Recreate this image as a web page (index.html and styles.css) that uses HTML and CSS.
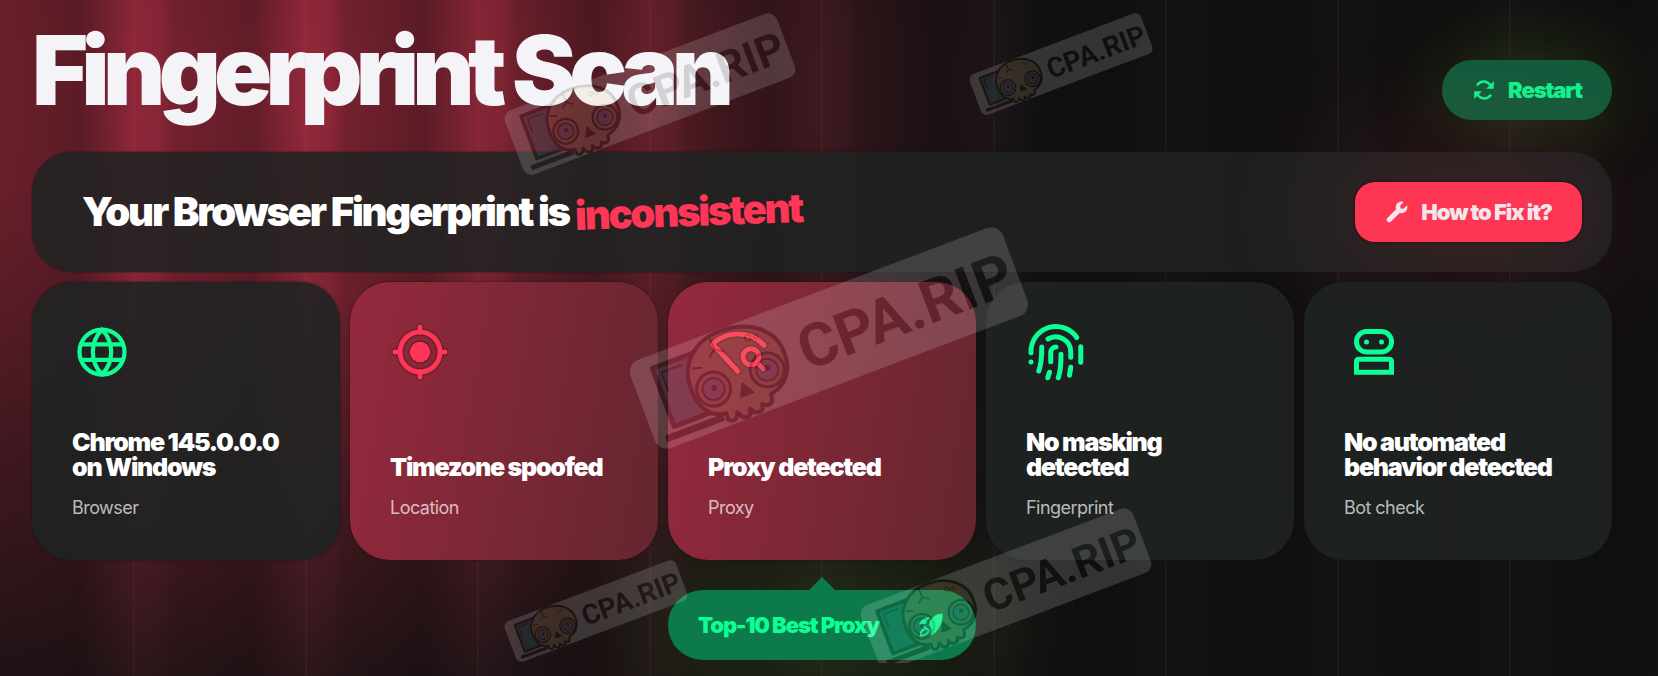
FILE: index.html
```html
<!DOCTYPE html>
<html lang="en">
<head>
    <meta charset="UTF-8">
    <meta name="viewport" content="width=device-width, initial-scale=1.0">
    <title>Fingerprint Scan</title>
    <link rel="stylesheet" href="styles.css">
</head>
<body>
    <main class="scan">
        <header class="scan__header">
            <h1 class="scan__title">Fingerprint Scan</h1>
            <button class="button button--restart" type="button">
                <svg class="button__icon" viewBox="0 0 24 24" aria-hidden="true">
                    <path d="M5.4 6.6C9 2.4 15 2.4 18.6 7.4M18.6 17.4C15 21.6 9 21.6 5.4 16.6" fill="none" stroke="currentColor" stroke-width="2.4" stroke-linecap="round"/>
                    <path d="M21.8 3v7.8h-7.6zM2.2 21v-7.8h7.6z" fill="currentColor"/>
                </svg>
                Restart
            </button>
        </header>

        <section class="verdict">
            <h2 class="verdict__text">Your Browser Fingerprint is <span class="verdict__status">inconsistent</span></h2>
            <button class="button button--fix" type="button">
                <svg class="button__icon" viewBox="-40 -40 592 592" aria-hidden="true">
                    <path fill="currentColor" d="M507.73 109.1c-2.24-9.03-13.54-12.09-20.12-5.51l-74.36 74.36-67.88-11.31-11.31-67.88 74.36-74.36c6.62-6.62 3.43-17.9-5.66-20.16-47.38-11.74-99.55.91-136.58 37.93-39.64 39.64-50.55 97.1-34.05 147.2L18.74 402.76c-24.99 24.99-24.99 65.51 0 90.5 24.99 24.99 65.51 24.99 90.5 0l213.21-213.21c50.12 16.71 107.47 5.68 147.37-34.22 37.07-37.07 49.7-89.32 37.91-136.73z"/>
                </svg>
                How to Fix it?
            </button>
        </section>

        <section class="checks">
            <article class="card">
                <svg class="card__icon" viewBox="0 0 24 24" stroke-width="1.7" aria-hidden="true">
                    <circle cx="12" cy="12" r="9"/>
                    <path d="M12 3c-4.9 5-4.9 13 0 18M12 3c4.9 5 4.9 13 0 18M3.6 8.9h16.8M3.6 15.1h16.8"/>
                </svg>
                <h3 class="card__title">Chrome 145.0.0.0 on Windows</h3>
                <p class="card__label">Browser</p>
            </article>

            <article class="card card--bad">
                <svg class="card__icon" viewBox="0 0 24 24" stroke-width="2" aria-hidden="true">
                    <circle cx="12" cy="12" r="8"/>
                    <circle cx="12" cy="12" r="3.1" fill="currentColor"/>
                    <path d="M12 2v2M12 20v2M2 12h2M20 12h2"/>
                </svg>
                <h3 class="card__title">Timezone spoofed</h3>
                <p class="card__label">Location</p>
            </article>

            <article class="card card--bad">
                <svg class="card__icon" viewBox="0 0 24 24" stroke-width="2" aria-hidden="true">
                    <path d="M22.4 9.3C17.4 3.6 7.4 3.2 1.9 8.9l10 10.8"/>
                    <circle cx="17.2" cy="13.9" r="3.2"/>
                    <path d="M19.6 16.3l2.4 2.4"/>
                </svg>
                <h3 class="card__title">Proxy detected</h3>
                <p class="card__label">Proxy</p>
            </article>

            <article class="card">
                <svg class="card__icon" viewBox="0 0 24 24" stroke-width="2" aria-hidden="true">
                    <path d="M2 12.3V12a10 10 0 0 1 18.3-5.8"/>
                    <path d="M2 16h.01M6.3 10c0 3.5 0 6.5-1.2 9.6"/>
                    <path d="M8.8 6.8A6 6 0 0 1 17.9 12v2.1"/>
                    <path d="M12 10a2.1 2.1 0 0 0-2.1 2.2v3.7"/>
                    <path d="M14 12.9c0 3.3 0 6.5-1.1 9.4M9.4 20.1l-.7 2.2"/>
                    <path d="M17.9 18.1l-.5 3.2M21.9 9.9v6.2"/>
                </svg>
                <h3 class="card__title">No masking detected</h3>
                <p class="card__label">Fingerprint</p>
            </article>

            <article class="card">
                <svg class="card__icon" viewBox="0 0 24 24" stroke-width="2" aria-hidden="true">
                    <rect x="5" y="3.8" width="14" height="8.2" rx="4"/>
                    <path d="M5 20.1v-4.2q0-1 1-1h12q1 0 1 1v4.2z" stroke-linejoin="miter"/>
                    <path d="M9 8h.01M15 8h.01"/>
                </svg>
                <h3 class="card__title">No automated behavior detected</h3>
                <p class="card__label">Bot check</p>
            </article>

            <a class="promo" href="#">
                Top-10 Best Proxy
                <svg class="promo__icon" viewBox="-3 -3 30 30" aria-hidden="true">
                    <path fill="currentColor" d="M23.5.5C17 .5 12.500 4 9.500 11.500l2 3.500 1.500 2-2 6C19 20 24.500 9 23.500.5z"/>
                    <path fill="currentColor" d="M11 4C6 4.500 1.500 7 0 11.500l6.500-.5C7.500 8.500 9 6.500 11 4z"/>
                    <path d="M5.500 13.500c1 2 2.500 3 4.500 3.500-1 3-4 5-8 5.500-.5-3 .5-5 3-6" fill="none" stroke="currentColor" stroke-width="2" stroke-linecap="round" stroke-linejoin="round"/>
                </svg>
            </a>
        </section>
    </main>

    <div class="watermarks">
        <svg class="watermarks__canvas" viewBox="0 0 1658 663" aria-hidden="true">
            <defs>
                <g id="stamp">
                    <rect x="-199" y="-47" width="398" height="94" rx="13" fill="#fff"/>
                    <!-- laptop -->
                    <path d="M-176-34h52v62h-52z" fill="#3aa6b8" stroke="#151515" stroke-width="5" stroke-linejoin="round"/>
                    <path d="M-169-27h22M-169-27v20" fill="none" stroke="#151515" stroke-width="2"/>
                    <path d="M-188 37h62" stroke="#151515" stroke-width="7"/>
                    <!-- skull -->
                    <path d="M-98-45c-30-1-50 19-49 45 0 17 5 28 18 33l6 1v7q5 5 9 0l2-4 3 6q5 4 9 0l1-5 3 5q5 3 9 0l1-5 4 3q5 1 7-3l1-6c17-3 27-16 27-33 1-25-20-43-51-44z" fill="#e8c98a" stroke="#151515" stroke-width="4" stroke-linejoin="round"/>
                    <circle cx="-126" cy="7" r="17" fill="#d9b579" stroke="#151515" stroke-width="3"/>
                    <circle cx="-126" cy="7" r="11" fill="#8d9fd8" stroke="#151515" stroke-width="2"/>
                    <circle cx="-125" cy="6" r="3" fill="#151515"/>
                    <circle cx="-69" cy="8" r="17" fill="#d9b579" stroke="#151515" stroke-width="3"/>
                    <circle cx="-69" cy="8" r="11" fill="#8d9fd8" stroke="#151515" stroke-width="2"/>
                    <circle cx="-68" cy="6" r="3" fill="#151515"/>
                    <path d="M-97 12l7 12h-13z" fill="#151515" stroke="#151515" stroke-width="2" stroke-linejoin="round"/>
                    <path d="M-112-43l1 13-8 6M-111-30l8 6M-139-20l10 3" fill="none" stroke="#151515" stroke-width="2"/>
                    <circle cx="-76" cy="-29" r="3" fill="none" stroke="#151515"/>
                    <circle cx="-68" cy="-27" r="2" fill="none" stroke="#151515"/>
                    <text class="watermarks__text" x="-32" y="23">CPA.RIP</text>
                </g>
            </defs>
            <g opacity=".15"><use href="#stamp" transform="translate(650 94) rotate(-20.700) scale(.73)"/></g>
            <g opacity=".15"><use href="#stamp" transform="translate(1061 64) rotate(-20.700) scale(.46)"/></g>
            <g opacity=".15"><use href="#stamp" transform="translate(829 338) rotate(-20.700)"/></g>
            <g opacity=".15"><use href="#stamp" transform="translate(596 611) rotate(-20.700) scale(.46)"/></g>
            <g opacity=".15"><use href="#stamp" transform="translate(1006 589) rotate(-20.700) scale(.73)"/></g>
        </svg>
    </div>
</body>
</html>
```
FILE: styles.css
```css
* {
    box-sizing: border-box;
}

body {
    position: relative;
    min-height: 100vh;
    margin: 0;
    overflow-x: hidden;
    font-family: Inter, "Liberation Sans", sans-serif;
    color: #fff;
    background-color: #131313;
    background-image:
        repeating-linear-gradient(90deg,
            transparent 0,
            transparent 133px,
            rgba(255, 110, 120, 0.05) 133px,
            rgba(255, 110, 120, 0.05) 135px,
            transparent 135px,
            transparent 172px),
        repeating-linear-gradient(90deg,
            rgba(10, 8, 8, 0.2) 0,
            rgba(10, 8, 8, 0.36) 80px,
            rgba(10, 8, 8, 0) 134px,
            rgba(10, 8, 8, 0.06) 160px,
            rgba(10, 8, 8, 0.2) 172px),
        radial-gradient(ellipse 780px 600px at 260px 90px,
            rgba(158, 42, 62, 0.95) 0,
            rgba(150, 40, 58, 0.84) 35%,
            rgba(130, 34, 52, 0.4) 70%,
            rgba(120, 34, 50, 0) 100%),
        radial-gradient(ellipse 900px 500px at 200px 560px, rgba(120, 34, 50, 0.28), transparent);
}

h1, h2, h3, p {
    margin: 0;
}

.scan {
    padding: 20px 46px 16px 32px;
}

.scan__header {
    display: flex;
    align-items: flex-end;
    justify-content: space-between;
    margin-bottom: 32px;
}

.scan__title {
    font-size: 96px;
    line-height: 100px;
    font-weight: 900;
    letter-spacing: -0.07em;
    color: #f4f4f8;
}

/* buttons */
.button {
    display: flex;
    flex-shrink: 0;
    align-items: center;
    gap: 12px;
    height: 60px;
    padding: 0 30px;
    border: none;
    font-family: inherit;
    font-size: 22px;
    font-weight: 900;
    letter-spacing: -0.05em;
    cursor: pointer;
}

.button__icon {
    width: 24px;
    height: 24px;
}

.button--restart {
    border-radius: 30px;
    color: #10f58f;
    background-color: #125c3c;
    box-shadow: 0 0 70px rgba(80, 140, 40, 0.35), 0 0 2px #0a1a10;
}

.button--fix {
    border-radius: 20px;
    color: #f2e6ea;
    background-color: #ff3554;
    box-shadow: 0 0 140px 20px rgba(255, 53, 84, 0.2), 0 0 3px #100808;
}

/* verdict */
.verdict {
    position: relative;
    display: flex;
    align-items: center;
    justify-content: space-between;
    margin-bottom: 10px;
    padding: 30px 30px 30px 50px;
    border-radius: 40px;
    background-color: rgba(31, 35, 34, 0.86);
    box-shadow: 0 0 2px #141414;
}

.verdict__text {
    font-size: 40px;
    line-height: 48px;
    font-weight: 900;
    letter-spacing: -0.055em;
}

.verdict__status {
    display: inline-block;
    color: #ff3657;
    transform: rotate(-2deg);
}

/* cards */
.checks {
    display: grid;
    grid-template-columns: repeat(5, 1fr);
    gap: 30px 10px;
}

.card {
    position: relative;
    z-index: 1;
    display: flex;
    flex-direction: column;
    min-height: 278px;
    padding: 40px;
    border-radius: 40px;
    background-color: rgba(31, 35, 34, 0.88);
    box-shadow: 0 0 2px #141414;
}

.card--bad {
    background: linear-gradient(100deg, #95293d, #64262f);
}

.card__icon {
    width: 60px;
    height: 60px;
    margin-bottom: auto;
    overflow: visible;
    color: #0cff94;
    fill: none;
    stroke: currentColor;
    stroke-linecap: round;
    stroke-linejoin: round;
}

.card--bad .card__icon {
    color: #ff3657;
    filter: drop-shadow(0 0 1px rgba(0, 0, 0, 0.8));
}

.card__title {
    margin-bottom: 16px;
    font-size: 25px;
    line-height: 25px;
    font-weight: 900;
    letter-spacing: -0.05em;
}

.card__label {
    font-size: 18px;
    line-height: 24px;
    letter-spacing: -0.03em;
    color: rgba(255, 255, 255, 0.7);
}

/* promo under the proxy card */
.promo {
    position: relative;
    grid-column: 3;
    display: flex;
    align-items: center;
    justify-content: space-between;
    height: 70px;
    padding: 0 30px;
    border-radius: 35px;
    font-size: 22px;
    font-weight: 900;
    letter-spacing: -0.05em;
    text-decoration: none;
    color: #0cff94;
    background-color: #0c7a4b;
    box-shadow: 0 0 120px rgba(70, 150, 40, 0.4);
}

.promo::before {
    content: "";
    position: absolute;
    left: 50%;
    bottom: 100%;
    margin-left: -13px;
    border: 13px solid transparent;
    border-top-width: 0;
    border-bottom-color: #0c7a4b;
}

.promo__icon {
    width: 30px;
    height: 30px;
}

/* watermarks */
.watermarks {
    position: absolute;
    z-index: 2;
    inset: 0;
    overflow: hidden;
    pointer-events: none;
}

.watermarks__canvas {
    display: block;
    width: 100%;
}

.watermarks__text {
    font-family: Roboto, "Liberation Sans", sans-serif;
    font-size: 60px;
    font-weight: 700;
    fill: #151515;
}
```
